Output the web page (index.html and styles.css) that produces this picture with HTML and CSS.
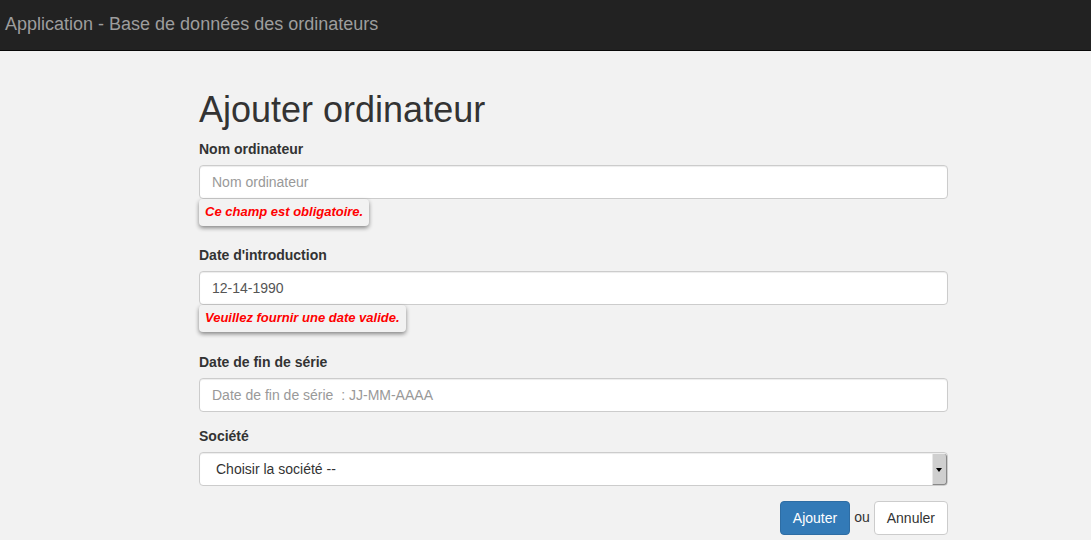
FILE: index.html
```html
<!DOCTYPE html>
<html lang="fr">
<head>
<meta charset="utf-8">
<title>Ajouter ordinateur</title>
<link rel="stylesheet" href="styles.css">
</head>
<body>
<header class="navbar">
  <a class="brand" href="#">Application - Base de données des ordinateurs</a>
</header>
<main class="container">
  <h1>Ajouter ordinateur</h1>
  <form>
    <div class="group">
      <label for="name">Nom ordinateur</label>
      <input id="name" class="control" type="text" placeholder="Nom ordinateur">
      <span class="error">Ce champ est obligatoire.</span>
    </div>
    <div class="group">
      <label for="intro">Date d'introduction</label>
      <input id="intro" class="control" type="text" value="12-14-1990">
      <span class="error">Veuillez fournir une date valide.</span>
    </div>
    <div class="group">
      <label for="disc">Date de fin de série</label>
      <input id="disc" class="control" type="text" placeholder="Date de fin de série  : JJ-MM-AAAA">
    </div>
    <div class="group">
      <label for="company">Société</label>
      <div class="select-wrap">
        <select id="company" class="control select">
          <option>Choisir la société --</option>
        </select>
        <span class="arrow"></span>
      </div>
    </div>
    <div class="actions">
      <button type="button" class="btn primary">Ajouter</button>
      <span class="or">ou</span>
      <button type="button" class="btn default">Annuler</button>
    </div>
  </form>
</main>
</body>
</html>
```

FILE: styles.css
```css
* { box-sizing: border-box; }
html, body { margin: 0; padding: 0; }
body {
  background: #f2f2f2;
  font-family: "Liberation Sans", Arial, sans-serif;
  font-size: 14px;
  line-height: 1.42857;
  color: #333;
}
.navbar {
  height: 51px;
  background: #222;
  border-bottom: 1px solid #080808;
  display: flex;
  align-items: center;
  padding-left: 5px;
}
.brand {
  color: #9d9d9d;
  font-size: 18px;
  text-decoration: none;
  line-height: 20px;
  margin-top: -2px;
}
.container {
  width: 749px;
  margin-left: 199px;
  padding-top: 19px;
}
h1 {
  font-size: 36px;
  font-weight: 500;
  line-height: 1.1;
  margin: 20px 0 10px;
  color: #333;
}
.group {
  margin-bottom: 15px;
}
label {
  display: block;
  font-weight: bold;
  margin-bottom: 5px;
  height: 20px;
}
.control {
  display: block;
  width: 100%;
  height: 34px;
  padding: 6px 12px;
  font-family: inherit;
  font-size: 14px;
  color: #555;
  background: #fff;
  border: 1px solid #ccc;
  border-radius: 4px;
  box-shadow: inset 0 1px 1px rgba(0,0,0,.075);
}
.control::placeholder { color: #999; }
.error {
  display: inline-block;
  margin-bottom: 5.5px;
  padding: 0 6px;
  height: 27px;
  line-height: 26px;
  font-size: 13px;
  font-weight: bold;
  font-style: italic;
  color: #f00;
  background: #f2f2f2;
  border-radius: 4px;
  box-shadow: 0 2px 4px rgba(0,0,0,.45);
}
.select-wrap {
  position: relative;
}
.select {
  appearance: none;
  -webkit-appearance: none;
  padding-left: 16px;
  color: #333;
}
.arrow {
  position: absolute;
  right: 1px;
  top: 2px;
  bottom: 1px;
  width: 15px;
  background: #cfcfcf;
  border-left: 1px solid #e8e8e8;
  border-right: 1px solid #888;
  border-bottom: 1px solid #888;
  border-radius: 0 3px 3px 0;
  pointer-events: none;
}
.arrow::after {
  content: "";
  position: absolute;
  left: 3px;
  top: 14px;
  border-left: 3px solid transparent;
  border-right: 3px solid transparent;
  border-top: 4px solid #000;
}
.actions {
  display: flex;
  justify-content: flex-end;
  align-items: center;
  gap: 4px;
}
.btn {
  height: 34px;
  padding: 6px 12px;
  font-family: inherit;
  font-size: 14px;
  line-height: 20px;
  border-radius: 4px;
  border: 1px solid transparent;
}
.primary {
  background: #337ab7;
  border-color: #2e6da4;
  color: #fff;
}
.default {
  background: #fff;
  border-color: #ccc;
  color: #333;
}
.or { color: #333; }
```
